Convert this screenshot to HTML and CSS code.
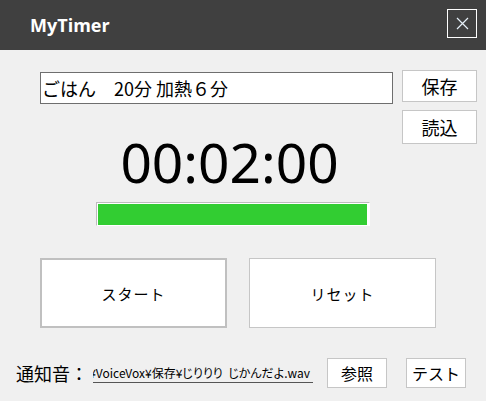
FILE: index.html
```html
<!DOCTYPE html>
<html lang="ja">
<head>
<meta charset="utf-8">
<title>MyTimer</title>
<link rel="stylesheet" href="styles.css">
</head>
<body>
<header class="titlebar">
  <span class="title">MyTimer</span>
  <button class="close" aria-label="close">
    <svg width="13" height="13" viewBox="0 0 13 13"><path d="M1 1 L12 12 M12 1 L1 12" stroke="#e6f0f8" stroke-width="1.2" fill="none"/></svg>
  </button>
</header>
<main class="content">
  <section class="top">
    <div class="name-input">ごはん　20分 加熱６分</div>
    <button class="side-btn save">保存</button>
    <div class="timer">00:02:00</div>
    <button class="side-btn load">読込</button>
  </section>
  <div class="progress"><div class="progress-fill" style="width:100%"></div></div>
  <section class="actions">
    <button class="big-btn focused">スタート</button>
    <button class="big-btn">リセット</button>
  </section>
  <section class="notify">
    <span class="notify-label">通知音：</span>
    <div class="path"><span class="path-text">Home¥VoiceVox¥保存¥じりりり  じかんだよ.wav</span></div>
    <button class="small-btn browse">参照</button>
    <button class="small-btn test">テスト</button>
  </section>
</main>
</body>
</html>
```
FILE: styles.css
```css
* { box-sizing: border-box; }
html, body { margin: 0; padding: 0; }
body {
  width: 486px;
  height: 401px;
  background: #f0f0f0;
  font-family: "Noto Sans CJK JP", "Noto Sans", sans-serif;
  color: #000;
  overflow: hidden;
}
button {
  font-family: "Noto Sans CJK JP", "Noto Sans", sans-serif;
  color: #000;
  background: #fff;
  padding: 0;
  margin: 0;
  cursor: default;
}
.titlebar {
  height: 50px;
  background: #404040;
  display: flex;
  align-items: center;
  justify-content: space-between;
  padding: 0 9px 0 30px;
}
.title {
  font-family: "Open Sans", "Noto Sans", sans-serif;
  font-weight: 700;
  font-size: 18px;
  color: #fff;
  margin-top: -1px;
}
.close {
  width: 30px;
  height: 29px;
  border: 1px solid #fff;
  background: transparent;
  display: flex;
  align-items: center;
  justify-content: center;
  margin-top: -3px;
}
.close svg { display: block; }
.content {
  padding-top: 20px;
}
.top {
  margin-left: 40px;
  display: grid;
  grid-template-columns: 353px 75px;
  column-gap: 9px;
  row-gap: 6px;
  align-items: start;
}
.name-input {
  grid-column: 1;
  grid-row: 1;
  margin-top: 2px;
  height: 32px;
  background: #fff;
  border: 1px solid #6e6e6e;
  font-size: 18px;
  line-height: 30px;
  padding-left: 1px;
  white-space: nowrap;
}
.side-btn {
  grid-column: 2;
  border: 1px solid #c6c6c6;
  font-size: 18px;
}
.save { grid-row: 1; height: 32px; }
.load { grid-row: 2; height: 34px; }
.timer {
  grid-column: 1;
  grid-row: 2;
  margin-top: 24px;
  padding-left: 26px;
  text-align: center;
  font-family: "Noto Sans", sans-serif;
  font-size: 55px;
  line-height: 56px;
  height: 56px;
}
.progress {
  margin: 12px 0 0 96px;
  width: 274px;
  height: 24px;
  background: #fff;
  border: 1px solid #bcbcbc;
  border-right-color: #fff;
  border-bottom-color: #fff;
  padding: 1px 2px 0 1px;
}
.progress-fill {
  height: 21px;
  background: #32cd32;
}
.actions {
  margin: 32px 0 0 40px;
  display: flex;
  gap: 22px;
}
.big-btn {
  width: 187px;
  height: 70px;
  border: 1px solid #c6c6c6;
  font-size: 15px;
  letter-spacing: 1px;
}
.big-btn.focused {
  border: 2px solid #c0c0c0;
}
.notify {
  margin: 30px 0 0 16px;
  display: flex;
  align-items: center;
  height: 30px;
}
.notify-label {
  font-size: 18px;
  line-height: 30px;
  white-space: nowrap;
  flex-shrink: 0;
}
.path {
  margin-left: 5px;
  width: 220px;
  height: 20px;
  border-bottom: 1px solid #555;
  overflow: hidden;
  display: flex;
  justify-content: flex-end;
  align-items: flex-end;
  padding-right: 3px;
  flex-shrink: 0;
}
.path-text {
  font-size: 12px;
  line-height: 18px;
  white-space: pre;
  flex-shrink: 0;
  font-feature-settings: "palt" 1;
}
.small-btn {
  width: 60px;
  height: 30px;
  border: 1px solid #c6c6c6;
  font-size: 16px;
  flex-shrink: 0;
}
.browse { margin-left: 14px; }
.test { margin-left: 19px; }
```
